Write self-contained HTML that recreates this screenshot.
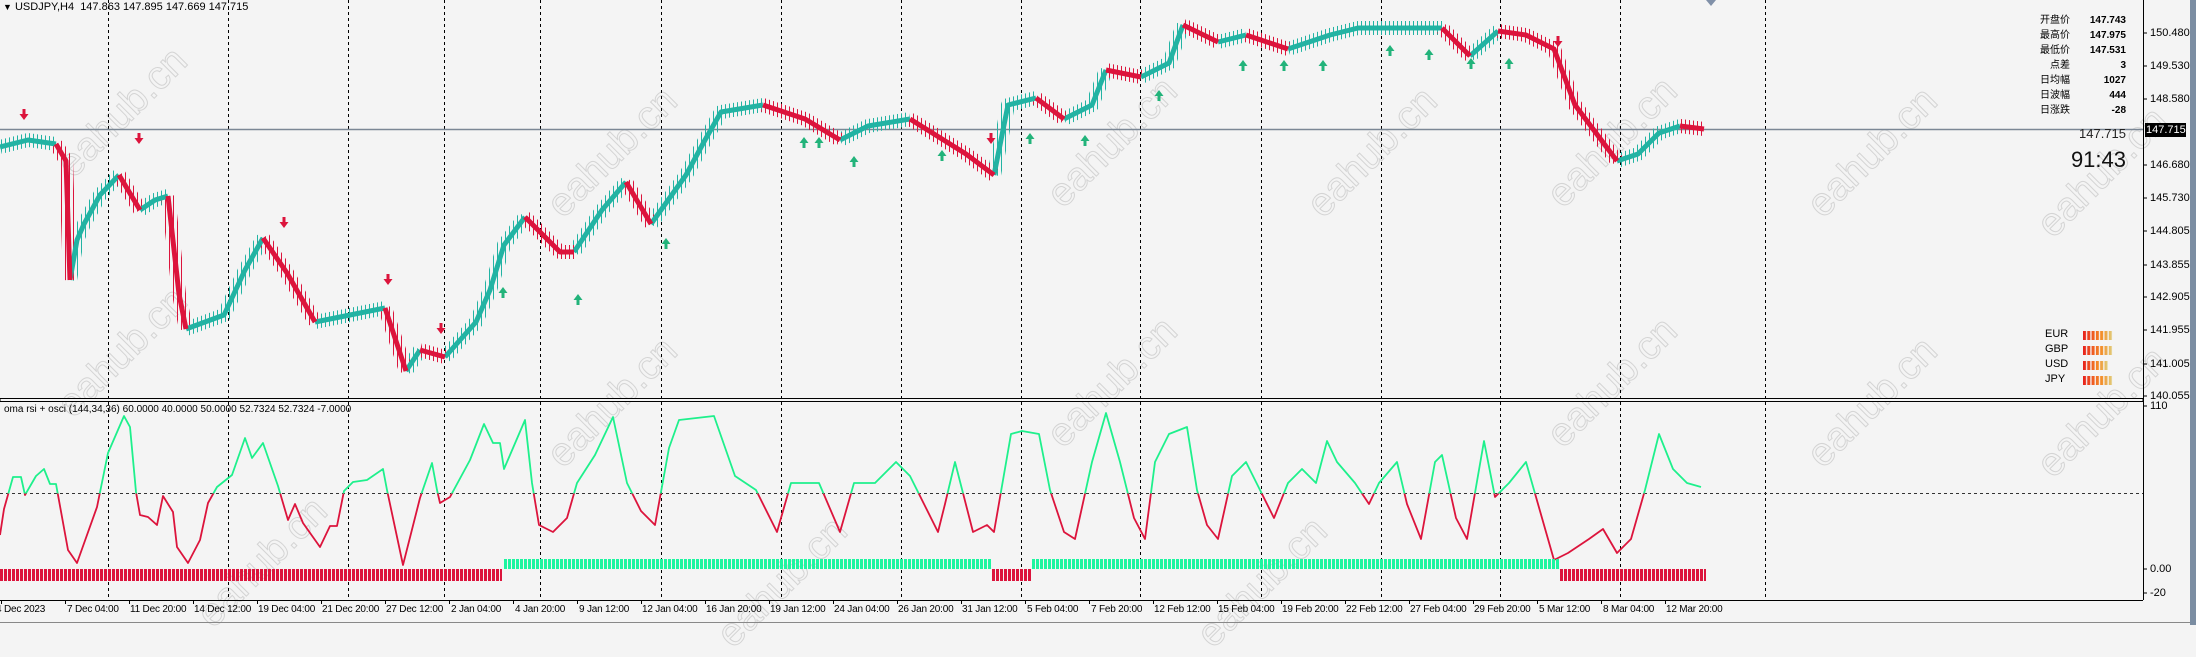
<!DOCTYPE html>
<html><head><meta charset="utf-8">
<style>
html,body{margin:0;padding:0;}
body{width:2196px;height:625px;position:relative;overflow:hidden;background:#f4f4f4;font-family:"Liberation Sans","Noto Sans CJK SC",sans-serif;color:#000;}
.t{position:absolute;font-size:11px;white-space:nowrap;line-height:1;}
.pa{position:absolute;left:2150px;font-size:11px;line-height:1;}
.lab{position:absolute;right:126px;font-size:10px;line-height:1;text-align:right;}
.val{position:absolute;right:70px;font-size:10px;font-weight:bold;line-height:1;text-align:right;}
.wm{position:absolute;font-size:40px;color:transparent;-webkit-text-stroke:1px #d4d4d4;transform:rotate(-45deg);white-space:nowrap;}
.tl{position:absolute;top:605px;font-size:10px;letter-spacing:-0.2px;white-space:nowrap;line-height:1;}
</style></head><body>
<div class="wm" style="left:40px;top:90px">eahub.cn</div>
<div class="wm" style="left:40px;top:330px">eahub.cn</div>
<div class="wm" style="left:180px;top:540px">eahub.cn</div>
<div class="wm" style="left:530px;top:130px">eahub.cn</div>
<div class="wm" style="left:530px;top:380px">eahub.cn</div>
<div class="wm" style="left:700px;top:560px">eahub.cn</div>
<div class="wm" style="left:1030px;top:120px">eahub.cn</div>
<div class="wm" style="left:1030px;top:360px">eahub.cn</div>
<div class="wm" style="left:1180px;top:560px">eahub.cn</div>
<div class="wm" style="left:1290px;top:130px">eahub.cn</div>
<div class="wm" style="left:1530px;top:360px">eahub.cn</div>
<div class="wm" style="left:1530px;top:120px">eahub.cn</div>
<div class="wm" style="left:1790px;top:130px">eahub.cn</div>
<div class="wm" style="left:1790px;top:380px">eahub.cn</div>
<div class="wm" style="left:2020px;top:150px">eahub.cn</div>
<div class="wm" style="left:2020px;top:390px">eahub.cn</div>

<svg width="2196" height="625" style="position:absolute;left:0;top:0">
<defs>
<clipPath id="ca" clipPathUnits="userSpaceOnUse"><rect x="0" y="380" width="2143" height="113.5"/></clipPath>
<clipPath id="cb" clipPathUnits="userSpaceOnUse"><rect x="0" y="493.5" width="2143" height="100"/></clipPath>
<pattern id="pr" x="0" y="0" width="4" height="20" patternUnits="userSpaceOnUse"><rect x="0" y="0" width="3" height="20" fill="#dc143c"/></pattern>
<pattern id="pg" x="0" y="0" width="4" height="20" patternUnits="userSpaceOnUse"><rect x="0" y="0" width="3" height="20" fill="#1ef5a0"/></pattern>
<pattern id="wt" x="0" y="0" width="4" height="10" patternUnits="userSpaceOnUse"><rect x="1" y="0" width="1" height="10" fill="#22b3a3"/></pattern>
<pattern id="wr" x="0" y="0" width="4" height="10" patternUnits="userSpaceOnUse"><rect x="1" y="0" width="1" height="10" fill="#dc143c"/></pattern>
<linearGradient id="cg" x1="0" x2="1"><stop offset="0" stop-color="#e8201c"/><stop offset="0.6" stop-color="#f58c26"/><stop offset="1" stop-color="#e0d080"/></linearGradient>
<pattern id="pc" x="2083" y="0" width="4.3" height="20" patternUnits="userSpaceOnUse"><rect x="0" y="0" width="3" height="20" fill="#fff"/></pattern>
<mask id="cm"><rect x="2083" y="320" width="40" height="70" fill="url(#pc)"/></mask>
<path id="dn" d="M-1.5,-7h3v5h3l-4.5,6l-4.5,-6h3z" fill="#dc143c"/>
<path id="up" d="M-1.5,7h3v-5h3l-4.5,-6l-4.5,6h3z" fill="#22b37a"/>
<path id="pt" d="M0,147L28,140L56,144 M70,280L77,240L84,224L100,195L119,175 M140,210L155,200L168,196 M186,329L205,322L224,315L245,270L263,238 M315,322L350,315L385,308 M406,371L420,350 M445,357L476,322L490,290L504,245L525,217 M574,252L602,210L626,182 M651,224L686,175L705,140L721,112L763,105 M840,140L868,126L910,119 M994,175L1008,105L1036,98 M1064,119L1092,105L1106,70 M1141,77L1169,63L1183,25 M1218,42L1246,35 M1288,49L1330,35L1358,28L1400,28L1442,28 M1470,56L1498,31 M1617,161L1638,154L1659,133L1680,126"/>
<path id="pd" d="M56,144L66,161L70,280 M119,175L140,210 M168,196L179,294L186,329 M263,238L287,273L315,322 M385,308L406,371 M420,350L445,357 M525,217L560,252L574,252 M626,182L651,224 M763,105L805,119L840,140 M910,119L966,154L994,175 M1036,98L1064,119 M1106,70L1141,77 M1183,25L1218,42 M1246,35L1288,49 M1442,28L1470,56 M1498,31L1526,35L1554,49L1575,105L1596,133L1617,161 M1680,126L1704,129"/>
<polyline id="ol" points="0,535 4,509 13,477 21,477 25,495 36,476 44,469 50,484 56,484 68,550 77,563 97,507 108,453 124,416 130,427 136,492 140,515 148,517 157,525 163,496 173,512 177,547 188,563 200,540 208,503 217,487 232,475 245,438 252,458 263,443 278,486 288,520 295,504 303,523 320,547 330,526 337,526 344,491 353,482 367,480 383,469 387,490 403,565 420,498 432,463 437,490 440,503 450,497 470,460 484,424 493,443 500,443 504,469 525,420 532,483 539,525 553,532 567,518 577,483 595,455 613,417 627,483 641,511 655,525 669,448 679,420 714,416 735,476 756,490 777,532 791,483 819,483 840,532 854,483 875,483 896,462 910,476 924,504 938,532 945,504 955,462 973,532 987,525 994,532 1011,434 1022,431 1039,434 1050,490 1064,532 1075,539 1092,462 1106,413 1120,462 1134,518 1145,539 1155,462 1169,434 1187,427 1197,490 1207,525 1218,539 1232,476 1246,462 1260,490 1274,518 1288,483 1302,469 1316,483 1327,441 1337,462 1355,483 1369,504 1379,483 1397,462 1407,504 1421,539 1435,462 1442,455 1456,518 1467,539 1484,441 1495,497 1509,483 1526,462 1540,511 1554,560 1568,553 1589,539 1603,529 1617,553 1631,539 1645,490 1659,434 1673,469 1687,483 1701,487"/>
</defs>
<g stroke="#000" stroke-dasharray="3,3">
<line x1="108.5" y1="0" x2="108.5" y2="600"/><line x1="228.5" y1="0" x2="228.5" y2="600"/><line x1="348.5" y1="0" x2="348.5" y2="600"/><line x1="444.5" y1="0" x2="444.5" y2="600"/><line x1="540.5" y1="0" x2="540.5" y2="600"/><line x1="661.5" y1="0" x2="661.5" y2="600"/><line x1="781.5" y1="0" x2="781.5" y2="600"/><line x1="901.5" y1="0" x2="901.5" y2="600"/><line x1="1021.5" y1="0" x2="1021.5" y2="600"/><line x1="1140.5" y1="0" x2="1140.5" y2="600"/><line x1="1261.5" y1="0" x2="1261.5" y2="600"/><line x1="1381.5" y1="0" x2="1381.5" y2="600"/><line x1="1500.5" y1="0" x2="1500.5" y2="600"/><line x1="1620.5" y1="0" x2="1620.5" y2="600"/><line x1="1765.5" y1="0" x2="1765.5" y2="600"/>
<line x1="0" y1="493.5" x2="2143" y2="493.5" stroke="#333"/>
</g>
<rect x="0" y="398.5" width="2143" height="3" fill="#f4f4f4" stroke="#000"/>
<line x1="0" y1="600.5" x2="2143" y2="600.5" stroke="#000"/>
<line x1="2143.5" y1="0" x2="2143.5" y2="600" stroke="#000"/>
<line x1="0" y1="622.5" x2="2196" y2="622.5" stroke="#888"/>
<rect x="2190" y="0" width="6" height="625" fill="#7b8da2"/>
<polygon points="1706,0 1716,0 1711,6" fill="#8090a8"/>
<line x1="0" y1="129.5" x2="2143" y2="129.5" stroke="#7b8795" stroke-width="1.5"/>
<g stroke="#000">
<line x1="2143" y1="33" x2="2147" y2="33"/><line x1="2143" y1="66" x2="2147" y2="66"/><line x1="2143" y1="99" x2="2147" y2="99"/><line x1="2143" y1="165" x2="2147" y2="165"/><line x1="2143" y1="198" x2="2147" y2="198"/><line x1="2143" y1="231" x2="2147" y2="231"/><line x1="2143" y1="265" x2="2147" y2="265"/><line x1="2143" y1="297" x2="2147" y2="297"/><line x1="2143" y1="330" x2="2147" y2="330"/><line x1="2143" y1="364" x2="2147" y2="364"/><line x1="2143" y1="396" x2="2147" y2="396"/><line x1="2143" y1="406" x2="2147" y2="406"/><line x1="2143" y1="569" x2="2147" y2="569"/><line x1="2143" y1="593" x2="2147" y2="593"/>
</g>
<path d="M1.5,600v4M65.5,600v4M129.5,600v4M193.5,600v4M257.5,600v4M321.5,600v4M385.5,600v4M449.5,600v4M513.5,600v4M577.5,600v4M641.5,600v4M705.5,600v4M769.5,600v4M833.5,600v4M897.5,600v4M961.5,600v4M1025.5,600v4M1089.5,600v4M1153.5,600v4M1217.5,600v4M1281.5,600v4M1345.5,600v4M1409.5,600v4M1473.5,600v4M1537.5,600v4M1601.5,600v4M1665.5,600v4" stroke="#000"/>

<g fill="none" stroke-linejoin="round">
<use href="#pt" stroke="url(#wt)" stroke-width="14"/>
<use href="#pd" stroke="url(#wr)" stroke-width="14"/>
<use href="#pt" stroke="#22b3a3" stroke-width="5"/>
<use href="#pd" stroke="#dc143c" stroke-width="5"/>
</g>

<use href="#dn" x="24" y="116"/><use href="#dn" x="139" y="140"/><use href="#dn" x="284" y="224"/><use href="#dn" x="388" y="281"/><use href="#dn" x="441" y="330"/><use href="#dn" x="991" y="140"/><use href="#dn" x="1558" y="43"/>
<use href="#up" x="503" y="291"/><use href="#up" x="578" y="298"/><use href="#up" x="666" y="242"/><use href="#up" x="804" y="141"/><use href="#up" x="819" y="141"/><use href="#up" x="854" y="160"/><use href="#up" x="942" y="154"/><use href="#up" x="1030" y="137"/><use href="#up" x="1085" y="139"/><use href="#up" x="1159" y="94"/><use href="#up" x="1243" y="64"/><use href="#up" x="1284" y="64"/><use href="#up" x="1323" y="64"/><use href="#up" x="1390" y="49"/><use href="#up" x="1429" y="53"/><use href="#up" x="1471" y="62"/><use href="#up" x="1509" y="62"/>

<use href="#ol" stroke="#1ef08c" stroke-width="1.8" fill="none" stroke-linejoin="round" clip-path="url(#ca)"/>
<use href="#ol" stroke="#dc143c" stroke-width="1.8" fill="none" stroke-linejoin="round" clip-path="url(#cb)"/>

<rect x="0" y="569" width="502" height="12" fill="url(#pr)"/>
<rect x="503" y="559" width="488" height="10" fill="url(#pg)"/>
<rect x="992" y="569" width="39" height="12" fill="url(#pr)"/>
<rect x="1032" y="559" width="527" height="10" fill="url(#pg)"/>
<rect x="1560" y="569" width="146" height="12" fill="url(#pr)"/>

<g mask="url(#cm)">
<rect x="2083" y="331" width="30" height="9" fill="url(#cg)"/>
<rect x="2083" y="346" width="30" height="9" fill="url(#cg)"/>
<rect x="2083" y="361" width="25" height="9" fill="url(#cg)"/>
<rect x="2083" y="376" width="30" height="9" fill="url(#cg)"/>
</g>
</svg>

<div class="t" style="left:3px;top:2px;"><span style="font-size:9px">▼</span> USDJPY,H4&nbsp; 147.863 147.895 147.669 147.715</div>
<div class="t" style="left:4px;top:405px;font-size:10px;">oma rsi + osci (144,34,36) 60.0000 40.0000 50.0000 52.7324 52.7324 -7.0000</div>

<div class="lab" style="top:16px">开盘价</div><div class="val" style="top:16px">147.743</div>
<div class="lab" style="top:31px">最高价</div><div class="val" style="top:31px">147.975</div>
<div class="lab" style="top:46px">最低价</div><div class="val" style="top:46px">147.531</div>
<div class="lab" style="top:61px">点差</div><div class="val" style="top:61px">3</div>
<div class="lab" style="top:76px">日均幅</div><div class="val" style="top:76px">1027</div>
<div class="lab" style="top:91px">日波幅</div><div class="val" style="top:91px">444</div>
<div class="lab" style="top:106px">日涨跌</div><div class="val" style="top:106px">-28</div>
<div class="t" style="right:70px;top:127px;font-size:13px;color:#222">147.715</div>
<div class="t" style="right:70px;top:149px;font-size:22px;color:#111">91:43</div>

<div class="t" style="left:2045px;top:329px">EUR</div>
<div class="t" style="left:2045px;top:344px">GBP</div>
<div class="t" style="left:2045px;top:359px">USD</div>
<div class="t" style="left:2045px;top:374px">JPY</div>

<div class="pa" style="top:28px">150.480</div>
<div class="pa" style="top:61px">149.530</div>
<div class="pa" style="top:94px">148.580</div>
<div class="pa" style="top:160px">146.680</div>
<div class="pa" style="top:193px">145.730</div>
<div class="pa" style="top:226px">144.805</div>
<div class="pa" style="top:260px">143.855</div>
<div class="pa" style="top:292px">142.905</div>
<div class="pa" style="top:325px">141.955</div>
<div class="pa" style="top:359px">141.005</div>
<div class="pa" style="top:391px">140.055</div>
<div style="position:absolute;left:2145px;top:123px;width:41px;height:14px;background:#000;"></div>
<div class="pa" style="top:125px;color:#fff;left:2146px">147.715</div>
<div class="pa" style="top:401px">110</div>
<div class="pa" style="top:564px">0.00</div>
<div class="pa" style="top:588px">-20</div>

<div class="tl" style="left:-4px">4 Dec 2023</div>
<div class="tl" style="left:67px">7 Dec 04:00</div>
<div class="tl" style="left:130px">11 Dec 20:00</div>
<div class="tl" style="left:194px">14 Dec 12:00</div>
<div class="tl" style="left:258px">19 Dec 04:00</div>
<div class="tl" style="left:322px">21 Dec 20:00</div>
<div class="tl" style="left:386px">27 Dec 12:00</div>
<div class="tl" style="left:451px">2 Jan 04:00</div>
<div class="tl" style="left:515px">4 Jan 20:00</div>
<div class="tl" style="left:579px">9 Jan 12:00</div>
<div class="tl" style="left:642px">12 Jan 04:00</div>
<div class="tl" style="left:706px">16 Jan 20:00</div>
<div class="tl" style="left:770px">19 Jan 12:00</div>
<div class="tl" style="left:834px">24 Jan 04:00</div>
<div class="tl" style="left:898px">26 Jan 20:00</div>
<div class="tl" style="left:962px">31 Jan 12:00</div>
<div class="tl" style="left:1027px">5 Feb 04:00</div>
<div class="tl" style="left:1091px">7 Feb 20:00</div>
<div class="tl" style="left:1154px">12 Feb 12:00</div>
<div class="tl" style="left:1218px">15 Feb 04:00</div>
<div class="tl" style="left:1282px">19 Feb 20:00</div>
<div class="tl" style="left:1346px">22 Feb 12:00</div>
<div class="tl" style="left:1410px">27 Feb 04:00</div>
<div class="tl" style="left:1474px">29 Feb 20:00</div>
<div class="tl" style="left:1539px">5 Mar 12:00</div>
<div class="tl" style="left:1603px">8 Mar 04:00</div>
<div class="tl" style="left:1666px">12 Mar 20:00</div>
</body></html>
